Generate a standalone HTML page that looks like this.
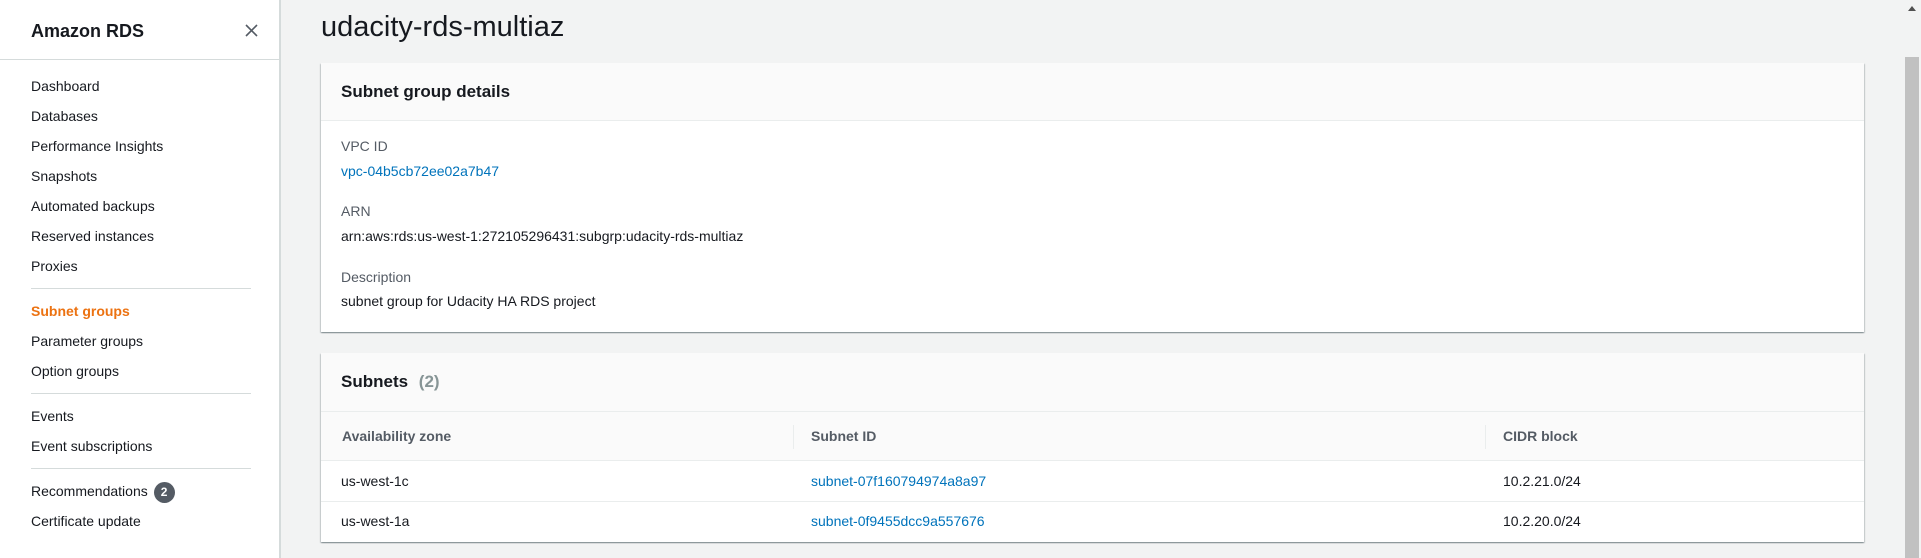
<!DOCTYPE html>
<html><head><meta charset="utf-8"><style>
*{margin:0;padding:0;box-sizing:border-box}
body{width:1921px;height:558px;overflow:hidden;background:#f2f3f3;font-family:"Liberation Sans",sans-serif;font-size:14px;color:#16191f;position:relative}
.a{position:absolute;white-space:nowrap}
#side{position:absolute;left:0;top:0;width:281px;height:558px;background:#fff;border-right:2px solid #d5dbdb}
.nav{position:absolute;left:31px;font-size:14px;line-height:18px;transform:translateY(-9px)}
.div{position:absolute;left:31px;width:220px;height:1px;background:#d5dbdb}
.card{position:absolute;left:321px;width:1543px;background:#fff;box-shadow:0 1px 1px 0 rgba(0,28,36,.3),1px 1px 1px 0 rgba(0,28,36,.15),-1px 1px 1px 0 rgba(0,28,36,.15)}
.hd{position:absolute;left:0;top:0;width:100%;background:#fafafa;border-bottom:1px solid #eaeded}
.lbl{color:#545b64}
.lnk{color:#0073bb}
.t{transform:translateY(-9px);line-height:18px}
</style></head><body>
<div id="side">
<div style="position:absolute;left:0;top:0;width:279px;height:60px;border-bottom:1px solid #d5dbdb"></div>
<div class="a" style="left:31px;top:20px;font-size:18px;font-weight:bold;line-height:22px">Amazon RDS</div>
<svg class="a" style="left:245px;top:24px" width="13" height="13" viewBox="0 0 13 13"><path d="M1 1L12 12M12 1L1 12" stroke="#545b64" stroke-width="1.6"/></svg>
<div class="nav a" style="top:86px">Dashboard</div>
<div class="nav a" style="top:116px">Databases</div>
<div class="nav a" style="top:146px">Performance Insights</div>
<div class="nav a" style="top:176px">Snapshots</div>
<div class="nav a" style="top:206px">Automated backups</div>
<div class="nav a" style="top:236px">Reserved instances</div>
<div class="nav a" style="top:266px">Proxies</div>
<div class="div" style="top:288px"></div>
<div class="nav a" style="top:311px;color:#ec7211;font-weight:bold">Subnet groups</div>
<div class="nav a" style="top:341px">Parameter groups</div>
<div class="nav a" style="top:371px">Option groups</div>
<div class="div" style="top:393px"></div>
<div class="nav a" style="top:416px">Events</div>
<div class="nav a" style="top:446px">Event subscriptions</div>
<div class="div" style="top:468px"></div>
<div class="nav a" style="top:491px">Recommendations <span style="display:inline-block;width:21px;height:21px;border-radius:11px;background:#545b64;color:#fff;font-size:12px;font-weight:bold;text-align:center;line-height:21px;vertical-align:middle;margin-left:2px">2</span></div>
<div class="nav a" style="top:521px">Certificate update</div>
</div>
<div class="a" style="left:321px;top:10px;font-size:29px;line-height:34px">udacity-rds-multiaz</div>
<div class="a" style="left:1905px;top:57px;width:14px;height:501px;background:#c1c1c1"></div>
<svg class="a" style="left:1908px;top:6px" width="8" height="5"><path d="M0 5L4 0L8 5Z" fill="#505050"/></svg>

<div class="card" style="top:63px;height:269px">
<div class="hd" style="height:58px"></div>
<div class="a t" style="left:20px;top:29px;font-size:17px;font-weight:bold">Subnet group details</div>
<div class="a t lbl" style="left:20px;top:83px">VPC ID</div>
<div class="a t lnk" style="left:20px;top:108px">vpc-04b5cb72ee02a7b47</div>
<div class="a t lbl" style="left:20px;top:148px">ARN</div>
<div class="a t" style="left:20px;top:173px">arn:aws:rds:us-west-1:272105296431:subgrp:udacity-rds-multiaz</div>
<div class="a t lbl" style="left:20px;top:214px">Description</div>
<div class="a t" style="left:20px;top:238px">subnet group for Udacity HA RDS project</div>
</div>

<div class="card" style="top:353px;height:189px">
<div class="hd" style="height:59px"></div>
<div class="a t" style="left:20px;top:29px;font-size:17px;font-weight:bold">Subnets <span style="color:#879596;margin-left:6px">(2)</span></div>
<div class="a" style="left:0;top:59px;width:100%;height:49px;background:#fafafa;border-bottom:1px solid #eaeded"></div>
<div class="a" style="left:472px;top:72px;width:1px;height:24px;background:#eaeded"></div>
<div class="a" style="left:1164px;top:72px;width:1px;height:24px;background:#eaeded"></div>
<div class="a t" style="left:21px;top:83px;font-weight:bold;color:#545b64">Availability zone</div>
<div class="a t" style="left:490px;top:83px;font-weight:bold;color:#545b64">Subnet ID</div>
<div class="a t" style="left:1182px;top:83px;font-weight:bold;color:#545b64">CIDR block</div>
<div class="a" style="left:0;top:148px;width:100%;height:1px;background:#eaeded"></div>
<div class="a t" style="left:20px;top:128px">us-west-1c</div>
<div class="a t lnk" style="left:490px;top:128px">subnet-07f160794974a8a97</div>
<div class="a t" style="left:1182px;top:128px">10.2.21.0/24</div>
<div class="a t" style="left:20px;top:168px">us-west-1a</div>
<div class="a t lnk" style="left:490px;top:168px">subnet-0f9455dcc9a557676</div>
<div class="a t" style="left:1182px;top:168px">10.2.20.0/24</div>
</div>
</body></html>
